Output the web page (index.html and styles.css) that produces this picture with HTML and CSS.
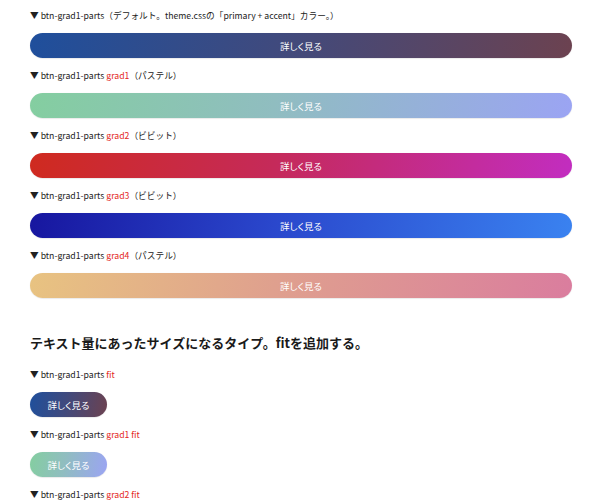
FILE: index.html
```html
<!DOCTYPE html>
<html lang="ja">
<head>
<meta charset="utf-8">
<link rel="stylesheet" href="styles.css">
</head>
<body>
<main class="page">
  <section class="list">
    <div class="item">
      <p class="label">▼ btn-grad1-parts（デフォルト。theme.cssの「primary + accent」カラー。）</p>
      <a class="btn g0">詳しく見る</a>
    </div>
    <div class="item">
      <p class="label">▼ btn-grad1-parts <span class="em">grad1</span>（パステル）</p>
      <a class="btn g1">詳しく見る</a>
    </div>
    <div class="item">
      <p class="label">▼ btn-grad1-parts <span class="em">grad2</span>（ビビット）</p>
      <a class="btn g2">詳しく見る</a>
    </div>
    <div class="item">
      <p class="label">▼ btn-grad1-parts <span class="em">grad3</span>（ビビット）</p>
      <a class="btn g3">詳しく見る</a>
    </div>
    <div class="item">
      <p class="label">▼ btn-grad1-parts <span class="em">grad4</span>（パステル）</p>
      <a class="btn g4">詳しく見る</a>
    </div>
  </section>
  <h2 class="heading">テキスト量にあったサイズになるタイプ。fitを追加する。</h2>
  <section class="list">
    <div class="item">
      <p class="label">▼ btn-grad1-parts <span class="em">fit</span></p>
      <a class="btn fit g0">詳しく見る</a>
    </div>
    <div class="item">
      <p class="label">▼ btn-grad1-parts <span class="em">grad1 fit</span></p>
      <a class="btn fit g1">詳しく見る</a>
    </div>
    <div class="item">
      <p class="label">▼ btn-grad1-parts <span class="em">grad2 fit</span></p>
      <a class="btn fit g2">詳しく見る</a>
    </div>
  </section>
</main>
</body>
</html>
```
FILE: styles.css
```css
html, body {
  margin: 0;
  background: #ffffff;
}
body {
  font-family: "Noto Sans CJK JP", "Noto Sans", sans-serif;
  color: #222222;
}
.page {
  padding: 6px 28px 0 30px;
}
.list {
  display: flex;
  flex-direction: column;
}
.item {
  display: flex;
  flex-direction: column;
  align-items: stretch;
  padding-bottom: 8px;
}
.label {
  margin: 0 0 7px;
  font-size: 8.7px;
  line-height: 20px;
  height: 20px;
  white-space: nowrap;
}
.em {
  color: #e3271c;
}
.btn {
  display: flex;
  align-items: center;
  justify-content: center;
  height: 25px;
  border-radius: 13px;
  color: #ffffff;
  font-size: 9.5px;
  font-feature-settings: "palt";
  box-sizing: border-box;
  box-shadow: 0 0.5px 1px rgba(0, 0, 0, 0.15);
}
.btn.fit {
  align-self: flex-start;
  width: 77px;
}
.g0 { background: linear-gradient(100deg, #1f4f9c 0%, #3f4a7e 45%, #6c4250 100%); }
.g1 { background: linear-gradient(100deg, #84cea0 0%, #90bdc0 45%, #9ba4f3 100%); }
.g2 { background: linear-gradient(100deg, #cf2a1f 0%, #c52a5a 45%, #c22dc0 100%); }
.g3 { background: linear-gradient(100deg, #17169f 0%, #2a47cc 45%, #3a82f0 100%); }
.g4 { background: linear-gradient(100deg, #e8c381 0%, #dfa08e 45%, #da7d9e 100%); }
.heading {
  margin: 25px 0 10px;
  font-size: 13px;
  font-weight: 700;
  line-height: 24px;
  color: #1a1a1a;
}
```
